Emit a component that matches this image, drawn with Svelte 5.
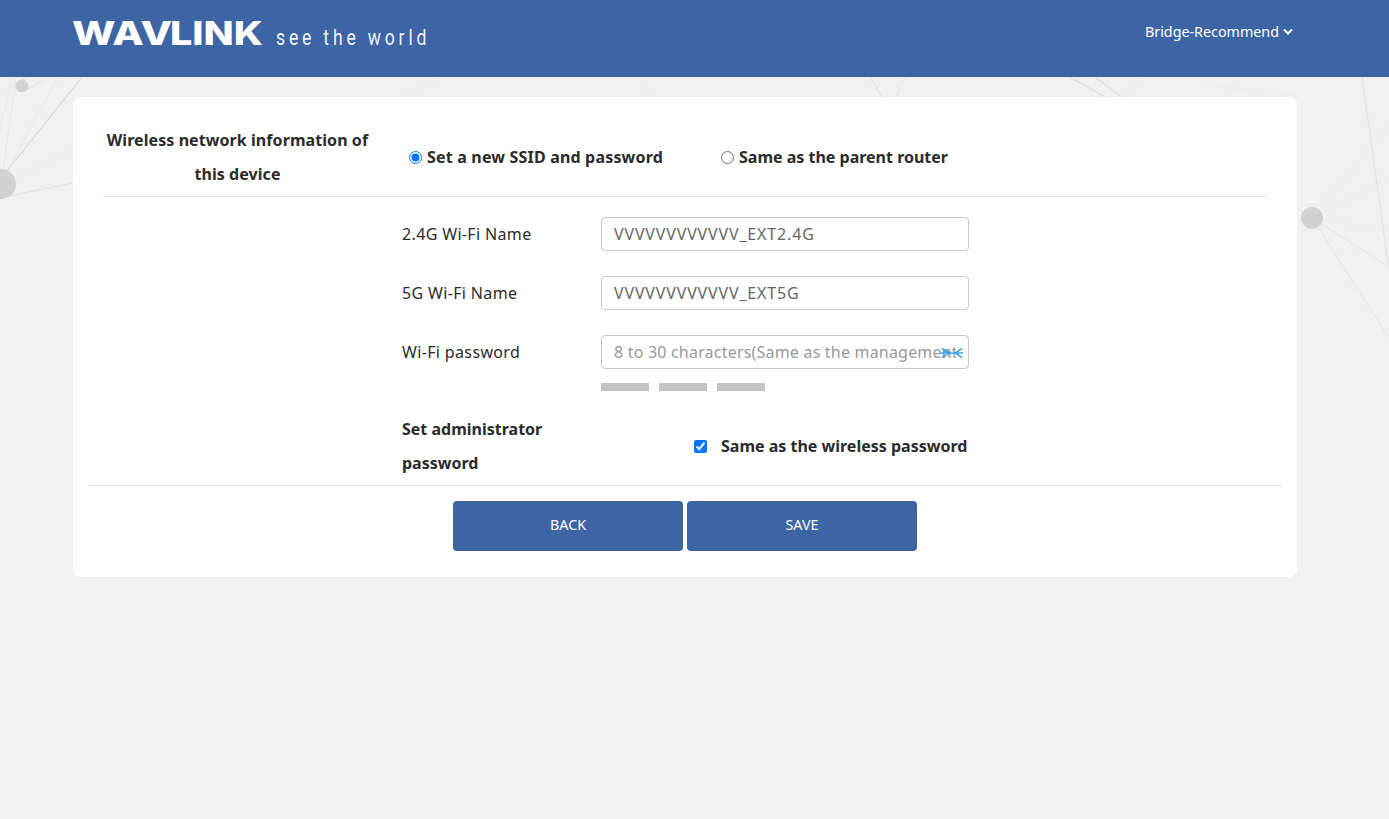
<script>
    let mode = $state("new");
    let samePassword = $state(true);
    let ssid24 = $state("VVVVVVVVVVVV_EXT2.4G");
    let ssid5 = $state("VVVVVVVVVVVV_EXT5G");
    let password = $state("");

    // decorative network behind the card: [x1, y1, x2, y2, opacity]
    const lines = [
        [6, 172, 82, 77, 0.9], [8, 170, 58, 77, 0.25], [3, 170, 16, 77, 0.35], [0, 130, 12, 77, 0.3],
        [10, 180, 73, 150, 0.15], [0, 198, 73, 183, 0.45],
        [26, 90, 44, 80, 0.5], [22, 80, 28, 77, 0.4],
        [400, 97, 440, 77, 0.15], [650, 97, 640, 77, 0.06],
        [882, 97, 870, 77, 0.55], [896, 97, 905, 77, 0.4],
        [1105, 97, 1070, 77, 0.75], [1121, 97, 1095, 77, 0.75], [1125, 97, 1140, 77, 0.15],
        [1297, 96, 1200, 84, 0.12],
        [1362, 77, 1389, 270, 0.5], [1312, 218, 1389, 125, 0.1],
        [1312, 218, 1389, 177, 0.12], [1312, 218, 1389, 232, 0.06],
        [1312, 218, 1389, 267, 0.35], [1312, 218, 1389, 338, 0.35],
        [1297, 208, 1312, 218, 0.35]
    ];
</script>

<div class="page">
    <svg class="network" width="1389" height="819" viewBox="0 0 1389 819" aria-hidden="true">
        {#each lines as [x1, y1, x2, y2, o]}
            <line {x1} {y1} {x2} {y2} stroke="#cfcfcf" stroke-opacity={o} />
        {/each}
        <circle cx="22" cy="86" r="6.5" fill="#d2d2d2" />
        <circle cx="1" cy="184" r="15" fill="#d2d2d2" />
        <circle cx="1312" cy="218" r="11" fill="#d2d2d2" />
    </svg>

    <header class="topbar">
        <div class="brand">
            <svg class="logo" width="192" height="48" viewBox="0 0 192 48" role="img" aria-label="WAVLINK">
                <text x="-1" y="36" textLength="100" lengthAdjust="spacingAndGlyphs">WAV</text>
                <text x="97" y="36" textLength="93" lengthAdjust="spacingAndGlyphs">LINK</text>
            </svg>
            <svg class="slogan" width="154" height="48" viewBox="0 0 154 48" role="img" aria-label="see the world">
                <text transform="scale(0.8 1)" x="0" y="36" textLength="188" lengthAdjust="spacing">see the world</text>
            </svg>
        </div>
        <button class="mode">
            Bridge-Recommend
            <svg width="10" height="8" viewBox="0 0 10 8" aria-hidden="true">
                <path d="M1 1.5 5 5.5 9 1.5" fill="none" stroke="#fff" stroke-width="2" />
            </svg>
        </button>
    </header>

    <main class="card">
        <section class="choice">
            <h2>Wireless network information of this device</h2>
            <div class="options">
                <label class="radio first">
                    <input type="radio" value="new" bind:group={mode} />
                    <span>Set a new SSID and password</span>
                </label>
                <label class="radio">
                    <input type="radio" value="parent" bind:group={mode} />
                    <span>Same as the parent router</span>
                </label>
            </div>
        </section>

        <section class="form">
            <div class="row">
                <span class="name">2.4G Wi-Fi Name</span>
                <input class="field" type="text" bind:value={ssid24} />
            </div>
            <div class="row">
                <span class="name">5G Wi-Fi Name</span>
                <input class="field" type="text" bind:value={ssid5} />
            </div>
            <div class="row last">
                <span class="name">Wi-Fi password</span>
                <div class="pass">
                    <input class="field" type="text" placeholder="8 to 30 characters(Same as the management password)" bind:value={password} />
                    <svg class="eye" width="22" height="12" viewBox="0 0 22 12" aria-hidden="true">
                        <path d="M0 6H22M1 1.5 9 6 1 10.5M21 1.5 14 6 21 10.5M3 2.5V9.500M6 4V8" fill="none" stroke="#3ea6e6" stroke-width="1.5" />
                    </svg>
                </div>
            </div>
            <div class="strength">
                <i></i><i></i><i></i>
            </div>
            <div class="admin">
                <strong>Set administrator password</strong>
                <label class="same">
                    <input type="checkbox" bind:checked={samePassword} />
                    <span>Same as the wireless password</span>
                </label>
            </div>
        </section>

        <footer class="actions">
            <button class="btn">BACK</button>
            <button class="btn">SAVE</button>
        </footer>
    </main>
</div>

<style>
    :global(body) {
        background: #f1f1f1;
    }
    .page {
        position: relative;
        min-height: 819px;
        font-family: "Noto Sans", "Open Sans", sans-serif;
        font-size: 16px;
        color: #2b2b2b;
    }
    .network {
        position: absolute;
        top: 0;
        left: 0;
    }
    .topbar {
        position: relative;
        height: 77px;
        box-sizing: border-box;
        background: #3d65a3;
        display: flex;
        justify-content: space-between;
        padding: 9px 96px 0 73px;
    }
    .brand {
        display: flex;
        align-items: flex-start;
        gap: 11px;
    }
    .logo text {
        font-family: Inter, sans-serif;
        font-weight: 800;
        font-size: 33px;
        fill: #fff;
    }
    .slogan text {
        font-family: Roboto, sans-serif;
        font-weight: 400;
        font-size: 22px;
        fill: #eef2f8;
    }
    .mode {
        height: 32px;
        margin-top: 6px;
        padding: 0;
        border: 0;
        background: none;
        color: #fff;
        font: inherit;
        font-size: 14.3px;
        display: flex;
        align-items: center;
        gap: 4px;
    }
    .mode svg {
        margin-top: 2px;
    }
    .card {
        position: relative;
        width: 1224px;
        height: 480px;
        box-sizing: border-box;
        margin: 20px 0 0 73px;
        padding: 26px 15px 0;
        background: #fff;
        border-radius: 8px;
    }
    .choice {
        display: flex;
        align-items: center;
        margin: 0 15px;
        padding-bottom: 5px;
        border-bottom: 1px solid #e2e2e2;
    }
    h2 {
        width: 269px;
        margin: 0;
        font-size: 16px;
        font-weight: 700;
        line-height: 34px;
        letter-spacing: 0.07px;
        text-align: center;
    }
    .options {
        display: flex;
        margin-left: 37px;
    }
    .radio {
        display: flex;
        align-items: center;
        gap: 5px;
        font-weight: 700;
    }
    .radio.first {
        width: 312px;
        letter-spacing: 0.18px;
    }
    .radio input {
        width: 13px;
        height: 13px;
        margin: 0;
    }
    .form {
        width: 567px;
        margin: 20px 0 0 314px;
    }
    .row {
        display: flex;
        align-items: center;
        margin-bottom: 25px;
        line-height: 34px;
    }
    .row.last {
        margin-bottom: 14px;
    }
    .name {
        width: 199px;
        flex: none;
        letter-spacing: 0.35px;
    }
    .field {
        width: 368px;
        height: 34px;
        box-sizing: border-box;
        padding: 0 12px;
        border: 1px solid #c8c8c8;
        border-radius: 4px;
        font: inherit;
        letter-spacing: 0.85px;
        color: #666;
        background: #fff;
    }
    .field::placeholder {
        color: #999;
        letter-spacing: 0.2px;
    }
    .pass {
        position: relative;
        display: flex;
    }
    .eye {
        position: absolute;
        right: 6px;
        top: 12px;
    }
    .strength {
        display: flex;
        gap: 10px;
        margin-left: 199px;
    }
    .strength i {
        width: 48px;
        height: 8px;
        background: #c4c4c4;
    }
    .admin {
        display: flex;
        align-items: center;
        margin-top: 21px;
        line-height: 34px;
    }
    .admin strong {
        width: 199px;
        flex: none;
    }
    .same {
        display: flex;
        align-items: center;
        margin-left: 93px;
        font-weight: 700;
        white-space: nowrap;
    }
    .same input {
        width: 13px;
        height: 13px;
        margin: 0 14px 0 0;
    }
    .actions {
        display: flex;
        gap: 4px;
        justify-content: flex-start;
        margin-top: 5px;
        padding: 15px 0 0 365px;
        border-top: 1px solid #e2e2e2;
    }
    .btn {
        width: 230px;
        height: 50px;
        padding: 0 0 3px;
        border: 0;
        border-radius: 4px;
        background: #3d65a3;
        color: #fff;
        font: inherit;
        font-size: 14.3px;
    }
</style>
